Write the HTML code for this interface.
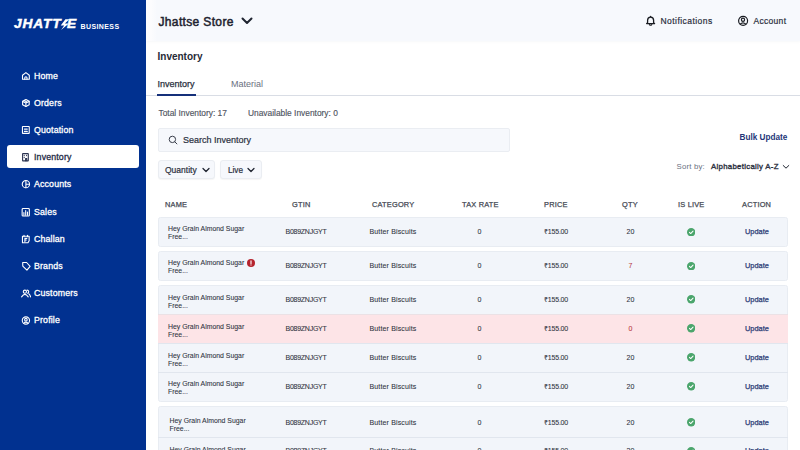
<!DOCTYPE html>
<html><head><meta charset="utf-8">
<style>
*{margin:0;padding:0;box-sizing:border-box}
html,body{width:800px;height:450px;overflow:hidden;background:#fff;font-family:"Liberation Sans",sans-serif;color:#1f2430}
.a{position:absolute;white-space:nowrap}
#side{position:absolute;left:0;top:0;width:146px;height:450px;background:#013190}
.logo{left:14px;top:16.5px;font-size:12.6px;font-weight:bold;font-style:italic;color:#fff;letter-spacing:0.8px;line-height:15px;-webkit-text-stroke:0.45px #fff;transform:scaleX(1.09);transform-origin:0 0}
.biz{left:80.5px;top:22px;font-size:7px;font-weight:bold;color:#fff;letter-spacing:0.4px;line-height:9px}
.nav{left:34px;font-size:8.8px;color:#fff;line-height:12px;letter-spacing:0.15px;-webkit-text-stroke:0.3px #fff}
.nic{position:absolute;left:21px;width:10px;height:10px}
#act{position:absolute;left:7px;top:145px;width:132px;height:23px;background:#fff;border-radius:3px}
#hdr{position:absolute;left:146px;top:0;width:654px;height:41px;background:linear-gradient(to right,#fdfdfe 0,#fcfcfe 5px,#f7f9fd 11px);box-shadow:0 1px 2px rgba(120,130,150,0.06)}
.store{left:158.5px;top:14.6px;font-size:12px;color:#1f2430;line-height:14px;letter-spacing:0.35px;-webkit-text-stroke:0.5px #1f2430}
.tr{font-size:8.5px;color:#2b3040;line-height:10px;-webkit-text-stroke:0.2px #2b3040}
.title{left:157.5px;top:51px;font-size:10px;font-weight:bold;color:#262a36;line-height:12px}
.tab{top:79px;font-size:9px;line-height:11px}
.small{font-size:8.4px;color:#50555f;line-height:10px;-webkit-text-stroke-width:0.15px}
#search{position:absolute;left:158px;top:128px;width:352px;height:23.5px;border:1px solid #eaedf2;background:#f6f8fc;border-radius:2px}
.dd{position:absolute;top:160px;height:19px;border:1px solid #eaedf2;background:#f6f8fc;border-radius:3px;box-shadow:0 1px 1px rgba(0,0,0,0.04)}
.th{top:200.3px;font-size:7.4px;color:#454953;line-height:10px;letter-spacing:0.2px;-webkit-text-stroke-width:0.25px}
.card{position:absolute;left:158px;width:630px;background:#f2f5fa;border:1px solid #e8ecf2;border-radius:2.5px}
.sep{left:158px;width:630px;height:1px;background:#e1e6ee}
.row{position:absolute;left:158px;width:630px}
.c{position:absolute;font-size:7px;color:#30343f;white-space:nowrap;line-height:10px;-webkit-text-stroke-width:0.08px}
.nm{line-height:8px;font-size:6.9px}
.upd{font-size:7.4px;color:#2e3d78;-webkit-text-stroke-width:0.25px!important}
</style></head><body>
<div id="side"></div>
<div class="a logo">JHATT</div><div class="a logo" style="left:67.3px">E</div>
<svg class="a" style="left:59.5px;top:19px" width="10" height="11" viewBox="0 0 10 11"><path d="M5.4 0.2H9.3L4.9 4.5H8.9L1.1 10.9L4.2 6.6H0.7Z" fill="#fff"/></svg>
<div class="a biz">BUSINESS</div>
<div id="act"></div>
<svg class="nic" style="top:71.0px" viewBox="0 0 10 10" stroke="#fff" fill="none" stroke-width="1.1" stroke-linecap="round" stroke-linejoin="round"><path d="M1.5 4.3L4.9 1.6L8.3 4.3V8.2H1.5Z"/><path d="M3.8 8.2V6.8Q3.8 5.8 4.9 5.8Q6 5.8 6 6.8V8.2"/></svg>
<div class="a nav" style="top:70.0px">Home</div>
<svg class="nic" style="top:98.1px" viewBox="0 0 10 10" stroke="#fff" fill="none" stroke-width="1.1" stroke-linecap="round" stroke-linejoin="round"><path d="M4.9 1.5L8.2 3.3V6.7L4.9 8.5L1.6 6.7V3.3Z"/><path d="M1.7 3.4L4.9 5.1L8.1 3.4M4.9 5.1V8.4M3.2 2.4L6.5 4.2"/></svg>
<div class="a nav" style="top:97.1px">Orders</div>
<svg class="nic" style="top:125.2px" viewBox="0 0 10 10" stroke="#fff" fill="none" stroke-width="1.1" stroke-linecap="round" stroke-linejoin="round"><rect x="1.45" y="1.45" width="6.8" height="6.9" rx="0.4"/><path d="M3.4 4.1H6.3M3.4 6.4H6.3"/></svg>
<div class="a nav" style="top:124.2px">Quotation</div>
<svg class="nic" style="top:152.3px" viewBox="0 0 10 10" stroke="#2b3350" fill="none" stroke-width="1.1" stroke-linecap="round" stroke-linejoin="round"><rect x="1.6" y="1.6" width="5.7" height="7.3" rx="0.3"/><path d="M3.2 3.4V3.6M5.6 3.4V3.6M3.2 5.4V5.6M4.6 8.8V6.6H5.8V8.8"/></svg>
<div class="a nav" style="top:151.3px;color:#232a45;-webkit-text-stroke:0.3px #232a45">Inventory</div>
<svg class="nic" style="top:179.4px" viewBox="0 0 10 10" stroke="#fff" fill="none" stroke-width="1.1" stroke-linecap="round" stroke-linejoin="round"><circle cx="4.9" cy="5.15" r="3.65"/><path d="M4.9 1.6V8.6M4.9 5.2H8.4"/></svg>
<div class="a nav" style="top:178.4px">Accounts</div>
<svg class="nic" style="top:206.5px" viewBox="0 0 10 10" stroke="#fff" fill="none" stroke-width="1.1" stroke-linecap="round" stroke-linejoin="round"><rect x="1.15" y="1.55" width="7.2" height="7.5" rx="0.9"/><path d="M2.9 8.3V5.6M4.7 8.3V3.6M6.5 8.3V5.1"/></svg>
<div class="a nav" style="top:205.5px">Sales</div>
<svg class="nic" style="top:233.6px" viewBox="0 0 10 10" stroke="#fff" fill="none" stroke-width="1.1" stroke-linecap="round" stroke-linejoin="round"><path d="M1.45 2.3H8.15V6.8L7 8.75H1.45Z"/><path d="M3 1.3V2.8M6.5 1.3V2.8M3.9 7.6V4.4H5.8M3.9 6H5.3"/></svg>
<div class="a nav" style="top:232.6px">Challan</div>
<svg class="nic" style="top:260.7px" viewBox="0 0 10 10" stroke="#fff" fill="none" stroke-width="1.1" stroke-linecap="round" stroke-linejoin="round"><path d="M1.7 1.5H5.6L9.1 5.3L5.9 9.1L1.8 5.2Z"/></svg>
<div class="a nav" style="top:259.7px">Brands</div>
<svg class="nic" style="top:287.8px" viewBox="0 0 10 10" stroke="#fff" fill="none" stroke-width="1.1" stroke-linecap="round" stroke-linejoin="round"><circle cx="3.9" cy="3.7" r="1.6"/><path d="M0.6 8.9Q3.9 3.8 7.2 8.9"/><path d="M6.1 2.1A1.6 1.6 0 0 1 6.6 5.2M7.9 5.9Q9.2 7.2 9.6 8.9"/></svg>
<div class="a nav" style="top:286.8px">Customers</div>
<svg class="nic" style="top:314.9px" viewBox="0 0 10 10" stroke="#fff" fill="none" stroke-width="1.1" stroke-linecap="round" stroke-linejoin="round"><circle cx="4.9" cy="5.5" r="3.65"/><circle cx="4.9" cy="4.7" r="1.3"/><path d="M2.8 8.3Q4.9 5.9 7 8.3"/></svg>
<div class="a nav" style="top:313.9px">Profile</div>

<div id="hdr"></div>
<div class="a store">Jhattse Store</div>
<svg class="a" style="left:241px;top:17px" width="12" height="8" viewBox="0 0 12 8"><path d="M1.5 1.5L6 6L10.5 1.5" stroke="#1f2430" stroke-width="2" fill="none" stroke-linecap="round" stroke-linejoin="round"/></svg>
<svg class="a" style="left:643px;top:13px" width="16" height="16" viewBox="0 0 16 16"><path d="M4.6 9.6V7.3C4.6 5.4 5.9 4.1 7.6 4.1S10.6 5.4 10.6 7.3V9.6L11.6 10.6H3.6Z" stroke="#1a1c22" stroke-width="1.3" fill="none" stroke-linejoin="round"/><path d="M6.4 11.6Q7.6 12.9 8.8 11.6" stroke="#1a1c22" stroke-width="1.2" fill="none" stroke-linecap="round"/><circle cx="7.6" cy="3.5" r="0.7" fill="#1a1c22"/></svg>
<div class="a tr" style="left:660.5px;top:16px;letter-spacing:0.45px">Notifications</div>
<svg class="a" style="left:735px;top:13px" width="16" height="16" viewBox="0 0 16 16"><circle cx="8.1" cy="7.8" r="4.5" stroke="#1a1c22" stroke-width="1.2" fill="none"/><circle cx="8" cy="6.8" r="1.6" stroke="#1a1c22" stroke-width="1.2" fill="none"/><path d="M5.1 11.3Q8 8.5 10.9 11.3" stroke="#1a1c22" stroke-width="1.2" fill="none"/></svg>
<div class="a tr" style="left:753.5px;top:16px;letter-spacing:0.3px">Account</div>

<div class="a title">Inventory</div>
<div class="a tab" style="left:157.5px;color:#2b3040;-webkit-text-stroke-width:0.25px">Inventory</div>
<div class="a tab" style="left:231px;color:#6a7080">Material</div>
<div class="a" style="left:146px;top:95px;width:654px;height:1px;background:#d9dde5"></div>
<div class="a" style="left:157px;top:93.5px;width:38.5px;height:2.2px;background:#15307a"></div>

<div class="a small" style="left:158.5px;top:107.5px">Total Inventory: 17</div>
<div class="a small" style="left:248px;top:107.5px">Unavailable Inventory: 0</div>

<div id="search"></div>
<svg class="a" style="left:168px;top:135px" width="10" height="10" viewBox="0 0 10 10"><circle cx="4.4" cy="4.4" r="3.2" stroke="#3a3f4b" stroke-width="1" fill="none"/><path d="M6.8 6.8L8.9 8.9" stroke="#3a3f4b" stroke-width="1" stroke-linecap="round"/></svg>
<div class="a" style="left:183px;top:135px;font-size:9px;color:#2b3040;line-height:10px;-webkit-text-stroke-width:0.2px">Search Inventory</div>
<div class="a" style="left:739.5px;top:132px;font-size:8.2px;font-weight:bold;color:#243678;line-height:11px">Bulk Update</div>

<div class="dd" style="left:158px;width:57px"></div>
<div class="a" style="left:165px;top:165px;font-size:8.5px;line-height:10px;color:#2b3040;-webkit-text-stroke-width:0.2px">Quantity</div>
<svg class="a" style="left:202px;top:167px" width="8" height="6" viewBox="0 0 8 6"><path d="M1 1.5L4 4.5L7 1.5" stroke="#1f2430" stroke-width="1.25" fill="none" stroke-linecap="round" stroke-linejoin="round"/></svg>
<div class="dd" style="left:220px;width:42px"></div>
<div class="a" style="left:228px;top:165.6px;font-size:8.2px;line-height:10px;color:#2b3040;-webkit-text-stroke-width:0.2px">Live</div>
<svg class="a" style="left:247px;top:167px" width="8" height="6" viewBox="0 0 8 6"><path d="M1 1.5L4 4.5L7 1.5" stroke="#1f2430" stroke-width="1.25" fill="none" stroke-linecap="round" stroke-linejoin="round"/></svg>

<div class="a" style="left:676.5px;top:162px;font-size:7.8px;color:#6a7080;line-height:10px;letter-spacing:0.2px">Sort by:</div>
<div class="a" style="left:711px;top:162px;font-size:7.8px;color:#2b3040;line-height:10px;letter-spacing:0.3px;-webkit-text-stroke-width:0.35px">Alphabetically A-Z</div>
<svg class="a" style="left:781.8px;top:163.5px" width="8" height="6" viewBox="0 0 8 6"><path d="M1.2 1.5L4 4.2L6.8 1.5" stroke="#1f2430" stroke-width="1" fill="none" stroke-linecap="round" stroke-linejoin="round"/></svg>

<div class="a th" style="left:165px">NAME</div>
<div class="a th" style="left:292px">GTIN</div>
<div class="a th" style="left:372px">CATEGORY</div>
<div class="a th" style="left:462px">TAX RATE</div>
<div class="a th" style="left:544px">PRICE</div>
<div class="a th" style="left:622px">QTY</div>
<div class="a th" style="left:678px">IS LIVE</div>
<div class="a th" style="left:742px">ACTION</div>

<div class="card" style="top:217px;height:30px"></div>
<div class="row" style="top:217px;height:30px"><div class="c nm" style="left:10px;top:8.0px">Hey Grain Almond Sugar<br>Free...</div><div class="c" style="left:127.5px;top:10.0px;letter-spacing:-0.25px">B089ZNJGYT</div><div class="c" style="left:211.5px;top:10.0px;letter-spacing:0.15px">Butter Biscuits</div><div class="c" style="left:319.5px;top:10.0px">0</div><div class="c" style="left:386px;top:10.0px;letter-spacing:-0.2px">&#x20B9;155.00</div><div class="c" style="left:468.5px;top:10.0px">20</div><div class="c" style="left:528.8px;top:10.8px;line-height:0"><svg width="8.4" height="8.4" viewBox="0 0 10 10"><circle cx="5" cy="5" r="5" fill="#4ba56c"/><path d="M2.9 5.2L4.4 6.6L7.2 3.7" stroke="#fff" stroke-width="1.2" fill="none" stroke-linecap="round" stroke-linejoin="round"/></svg></div><div class="c upd" style="left:587px;top:10.0px">Update</div></div>
<div class="card" style="top:251px;height:30px"></div>
<div class="row" style="top:251px;height:30px"><div class="c nm" style="left:10px;top:8.0px">Hey Grain Almond Sugar<br>Free...</div><div class="c" style="left:89px;top:8.0px;line-height:0"><svg width="8" height="8" viewBox="0 0 10 10"><circle cx="5" cy="5" r="5" fill="#b5232d"/><path d="M5 2.4V5.6" stroke="#fff" stroke-width="1.4" stroke-linecap="round"/><circle cx="5" cy="7.4" r="0.75" fill="#fff"/></svg></div><div class="c" style="left:127.5px;top:10.0px;letter-spacing:-0.25px">B089ZNJGYT</div><div class="c" style="left:211.5px;top:10.0px;letter-spacing:0.15px">Butter Biscuits</div><div class="c" style="left:319.5px;top:10.0px">0</div><div class="c" style="left:386px;top:10.0px;letter-spacing:-0.2px">&#x20B9;155.00</div><div class="c" style="left:470.5px;top:10.0px;color:#b83a44">7</div><div class="c" style="left:528.8px;top:10.8px;line-height:0"><svg width="8.4" height="8.4" viewBox="0 0 10 10"><circle cx="5" cy="5" r="5" fill="#4ba56c"/><path d="M2.9 5.2L4.4 6.6L7.2 3.7" stroke="#fff" stroke-width="1.2" fill="none" stroke-linecap="round" stroke-linejoin="round"/></svg></div><div class="c upd" style="left:587px;top:10.0px">Update</div></div>
<div class="card" style="top:285px;height:117px"></div>
<div class="row" style="top:285px;height:29px"><div class="c nm" style="left:10px;top:9.0px">Hey Grain Almond Sugar<br>Free...</div><div class="c" style="left:127.5px;top:9.5px;letter-spacing:-0.25px">B089ZNJGYT</div><div class="c" style="left:211.5px;top:9.5px;letter-spacing:0.15px">Butter Biscuits</div><div class="c" style="left:319.5px;top:9.5px">0</div><div class="c" style="left:386px;top:9.5px;letter-spacing:-0.2px">&#x20B9;155.00</div><div class="c" style="left:468.5px;top:9.5px">20</div><div class="c" style="left:528.8px;top:10.3px;line-height:0"><svg width="8.4" height="8.4" viewBox="0 0 10 10"><circle cx="5" cy="5" r="5" fill="#4ba56c"/><path d="M2.9 5.2L4.4 6.6L7.2 3.7" stroke="#fff" stroke-width="1.2" fill="none" stroke-linecap="round" stroke-linejoin="round"/></svg></div><div class="c upd" style="left:587px;top:9.5px">Update</div></div>
<div class="a" style="left:158px;top:314px;width:630px;height:29px;background:#fde4e7;border-top:1px solid #ebe1e5"></div>
<div class="row" style="top:314px;height:29px"><div class="c nm" style="left:10px;top:9.0px">Hey Grain Almond Sugar<br>Free...</div><div class="c" style="left:127.5px;top:9.5px;letter-spacing:-0.25px">B089ZNJGYT</div><div class="c" style="left:211.5px;top:9.5px;letter-spacing:0.15px">Butter Biscuits</div><div class="c" style="left:319.5px;top:9.5px">0</div><div class="c" style="left:386px;top:9.5px;letter-spacing:-0.2px">&#x20B9;155.00</div><div class="c" style="left:470.5px;top:9.5px;color:#b83a44">0</div><div class="c" style="left:528.8px;top:10.3px;line-height:0"><svg width="8.4" height="8.4" viewBox="0 0 10 10"><circle cx="5" cy="5" r="5" fill="#4ba56c"/><path d="M2.9 5.2L4.4 6.6L7.2 3.7" stroke="#fff" stroke-width="1.2" fill="none" stroke-linecap="round" stroke-linejoin="round"/></svg></div><div class="c upd" style="left:587px;top:9.5px">Update</div></div>
<div class="a sep" style="top:343px"></div>
<div class="row" style="top:343px;height:29px"><div class="c nm" style="left:10px;top:9.0px">Hey Grain Almond Sugar<br>Free...</div><div class="c" style="left:127.5px;top:9.5px;letter-spacing:-0.25px">B089ZNJGYT</div><div class="c" style="left:211.5px;top:9.5px;letter-spacing:0.15px">Butter Biscuits</div><div class="c" style="left:319.5px;top:9.5px">0</div><div class="c" style="left:386px;top:9.5px;letter-spacing:-0.2px">&#x20B9;155.00</div><div class="c" style="left:468.5px;top:9.5px">20</div><div class="c" style="left:528.8px;top:10.3px;line-height:0"><svg width="8.4" height="8.4" viewBox="0 0 10 10"><circle cx="5" cy="5" r="5" fill="#4ba56c"/><path d="M2.9 5.2L4.4 6.6L7.2 3.7" stroke="#fff" stroke-width="1.2" fill="none" stroke-linecap="round" stroke-linejoin="round"/></svg></div><div class="c upd" style="left:587px;top:9.5px">Update</div></div>
<div class="a sep" style="top:372px"></div>
<div class="row" style="top:372px;height:29px"><div class="c nm" style="left:10px;top:7.8px">Hey Grain Almond Sugar<br>Free...</div><div class="c" style="left:127.5px;top:9.5px;letter-spacing:-0.25px">B089ZNJGYT</div><div class="c" style="left:211.5px;top:9.5px;letter-spacing:0.15px">Butter Biscuits</div><div class="c" style="left:319.5px;top:9.5px">0</div><div class="c" style="left:386px;top:9.5px;letter-spacing:-0.2px">&#x20B9;155.00</div><div class="c" style="left:468.5px;top:9.5px">20</div><div class="c" style="left:528.8px;top:10.3px;line-height:0"><svg width="8.4" height="8.4" viewBox="0 0 10 10"><circle cx="5" cy="5" r="5" fill="#4ba56c"/><path d="M2.9 5.2L4.4 6.6L7.2 3.7" stroke="#fff" stroke-width="1.2" fill="none" stroke-linecap="round" stroke-linejoin="round"/></svg></div><div class="c upd" style="left:587px;top:9.5px">Update</div></div>
<div class="card" style="top:406px;height:80px"></div>
<div class="row" style="top:407px;height:31px"><div class="c nm" style="left:11.5px;top:10.0px">Hey Grain Almond Sugar<br>Free...</div><div class="c" style="left:127.5px;top:10.5px;letter-spacing:-0.25px">B089ZNJGYT</div><div class="c" style="left:211.5px;top:10.5px;letter-spacing:0.15px">Butter Biscuits</div><div class="c" style="left:319.5px;top:10.5px">0</div><div class="c" style="left:386px;top:10.5px;letter-spacing:-0.2px">&#x20B9;155.00</div><div class="c" style="left:468.5px;top:10.5px">20</div><div class="c" style="left:528.8px;top:11.3px;line-height:0"><svg width="8.4" height="8.4" viewBox="0 0 10 10"><circle cx="5" cy="5" r="5" fill="#4ba56c"/><path d="M2.9 5.2L4.4 6.6L7.2 3.7" stroke="#fff" stroke-width="1.2" fill="none" stroke-linecap="round" stroke-linejoin="round"/></svg></div><div class="c upd" style="left:587px;top:10.5px">Update</div></div>
<div class="a sep" style="top:437px"></div>
<div class="row" style="top:437px;height:28px"><div class="c nm" style="left:11.5px;top:8.5px">Hey Grain Almond Sugar<br>Free...</div><div class="c" style="left:127.5px;top:9.0px;letter-spacing:-0.25px">B089ZNJGYT</div><div class="c" style="left:211.5px;top:9.0px;letter-spacing:0.15px">Butter Biscuits</div><div class="c" style="left:319.5px;top:9.0px">0</div><div class="c" style="left:386px;top:9.0px;letter-spacing:-0.2px">&#x20B9;155.00</div><div class="c" style="left:468.5px;top:9.0px">20</div><div class="c" style="left:528.8px;top:9.8px;line-height:0"><svg width="8.4" height="8.4" viewBox="0 0 10 10"><circle cx="5" cy="5" r="5" fill="#4ba56c"/><path d="M2.9 5.2L4.4 6.6L7.2 3.7" stroke="#fff" stroke-width="1.2" fill="none" stroke-linecap="round" stroke-linejoin="round"/></svg></div><div class="c upd" style="left:587px;top:9.0px">Update</div></div>

</body></html>
